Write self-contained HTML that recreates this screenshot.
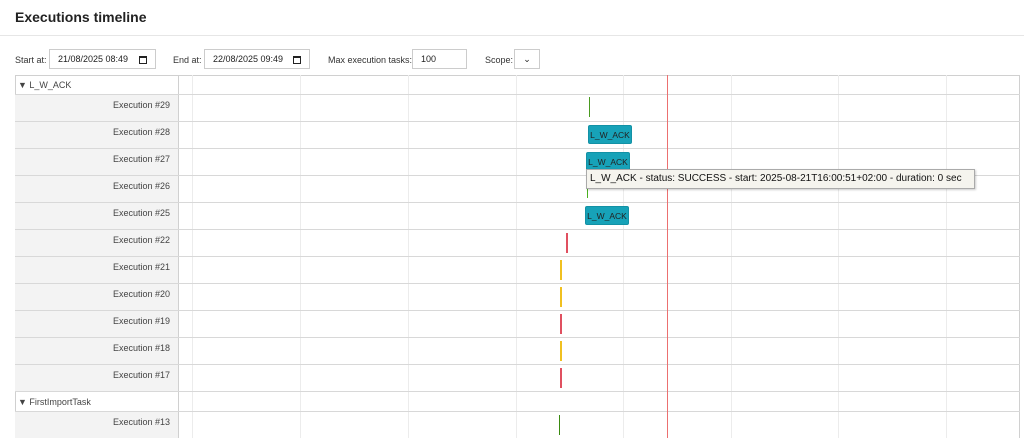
<!DOCTYPE html>
<html><head><style>
body{margin:0;width:1024px;height:438px;overflow:hidden;background:#fff;font-family:"Liberation Sans",sans-serif;position:relative;color:#222}
.a{position:absolute}
.t{left:15px;top:9px;font-size:14px;font-weight:bold;color:#222}
.hr{left:0;top:35px;width:1024px;height:1px;background:#e6e6e6}
.lbl{font-size:9px;color:#333;top:55px}
.in{border:1px solid #ccc;height:20px;top:49px;font-size:9px;line-height:19px;padding-left:8px;box-sizing:border-box;background:#fff}
.cal{position:absolute;right:8px;top:6px;width:6px;height:5px;border:1px solid #222;border-top-width:2px}
.row{left:15px;width:1005px;height:1px;background:#d8d8d8}
.vl{top:75px;width:1px;height:363px;background:#ececec}
.ex{left:15px;width:163px;background:#f3f3f3;font-size:9px;color:#444;text-align:right;box-sizing:border-box;padding-right:8px}
.gr{left:18px;font-size:9px;color:#444}
.bar{background:#17a2b8;border:1px solid #1391a5;border-radius:2px;height:19px;font-size:8.5px;color:#222;line-height:18px;text-align:center;box-sizing:border-box}
.m{width:2px;height:20px}
</style></head><body>
<div class="a t">Executions timeline</div>
<div class="a hr"></div>
<div class="a lbl" style="left:15px">Start at:</div>
<div class="a in" style="left:49px;width:107px">21/08/2025 08:49<span class="cal"></span></div>
<div class="a lbl" style="left:173px">End at:</div>
<div class="a in" style="left:204px;width:106px">22/08/2025 09:49<span class="cal"></span></div>
<div class="a lbl" style="left:328px">Max execution tasks:</div>
<div class="a in" style="left:412px;width:55px">100</div>
<div class="a lbl" style="left:485px">Scope:</div>
<div class="a in" style="left:514px;width:26px;text-align:center;padding:0;font-size:9px">&#8964;</div>

<div class="a" style="left:15px;top:75px;width:1005px;height:363px;border:1px solid #d0d0d0;box-sizing:border-box;border-bottom:none"></div>
<div class="a ex" style="top:94px;height:297px"></div>
<div class="a ex" style="top:411px;height:27px"></div>
<div class="a vl" style="left:178px;background:#d0d0d0"></div>
<div class="a vl" style="left:192px"></div>
<div class="a vl" style="left:300px"></div>
<div class="a vl" style="left:408px"></div>
<div class="a vl" style="left:516px"></div>
<div class="a vl" style="left:623px"></div>
<div class="a vl" style="left:731px"></div>
<div class="a vl" style="left:838px"></div>
<div class="a vl" style="left:946px"></div>

<div class="a row" style="top:94px"></div>
<div class="a row" style="top:121px"></div>
<div class="a row" style="top:148px"></div>
<div class="a row" style="top:175px"></div>
<div class="a row" style="top:202px"></div>
<div class="a row" style="top:229px"></div>
<div class="a row" style="top:256px"></div>
<div class="a row" style="top:283px"></div>
<div class="a row" style="top:310px"></div>
<div class="a row" style="top:337px"></div>
<div class="a row" style="top:364px"></div>
<div class="a row" style="top:391px"></div>
<div class="a row" style="top:411px"></div>

<div class="a gr" style="top:80px">▼ L_W_ACK</div>
<div class="a gr" style="top:397px">▼ FirstImportTask</div>
<div class="a ex" style="top:100px;background:none">Execution #29</div>
<div class="a ex" style="top:127px;background:none">Execution #28</div>
<div class="a ex" style="top:154px;background:none">Execution #27</div>
<div class="a ex" style="top:181px;background:none">Execution #26</div>
<div class="a ex" style="top:208px;background:none">Execution #25</div>
<div class="a ex" style="top:235px;background:none">Execution #22</div>
<div class="a ex" style="top:262px;background:none">Execution #21</div>
<div class="a ex" style="top:289px;background:none">Execution #20</div>
<div class="a ex" style="top:316px;background:none">Execution #19</div>
<div class="a ex" style="top:343px;background:none">Execution #18</div>
<div class="a ex" style="top:370px;background:none">Execution #17</div>
<div class="a ex" style="top:417px;background:none">Execution #13</div>

<div class="a" style="left:667px;top:75px;width:1px;height:363px;background:#ec7070"></div>

<div class="a m" style="left:589px;top:97px;width:1px;background:#4a9a20"></div>
<div class="a bar" style="left:588px;top:125px;width:44px">L_W_ACK</div>
<div class="a bar" style="left:586px;top:152px;width:44px">L_W_ACK</div>
<div class="a m" style="left:587px;top:178px;width:1px;background:#4ab020"></div>
<div class="a bar" style="left:585px;top:206px;width:44px">L_W_ACK</div>
<div class="a m" style="left:566px;top:233px;background:#e05060"></div>
<div class="a m" style="left:560px;top:260px;background:#f0c020"></div>
<div class="a m" style="left:560px;top:287px;background:#f0c020"></div>
<div class="a m" style="left:560px;top:314px;background:#e05060"></div>
<div class="a m" style="left:560px;top:341px;background:#f0c020"></div>
<div class="a m" style="left:560px;top:368px;background:#e05060"></div>
<div class="a m" style="left:559px;top:415px;width:1px;background:#3a8a10"></div>

<div class="a" style="left:586px;top:169px;width:389px;height:20px;background:#f5f4ee;border:1px solid #aaa;box-sizing:border-box;box-shadow:1px 1px 2px rgba(0,0,0,.2);font-size:10px;line-height:18px;padding-left:3px;color:#111;white-space:nowrap;overflow:hidden">L_W_ACK - status: SUCCESS - start: 2025-08-21T16:00:51+02:00 - duration: 0 sec</div>
</body></html>
